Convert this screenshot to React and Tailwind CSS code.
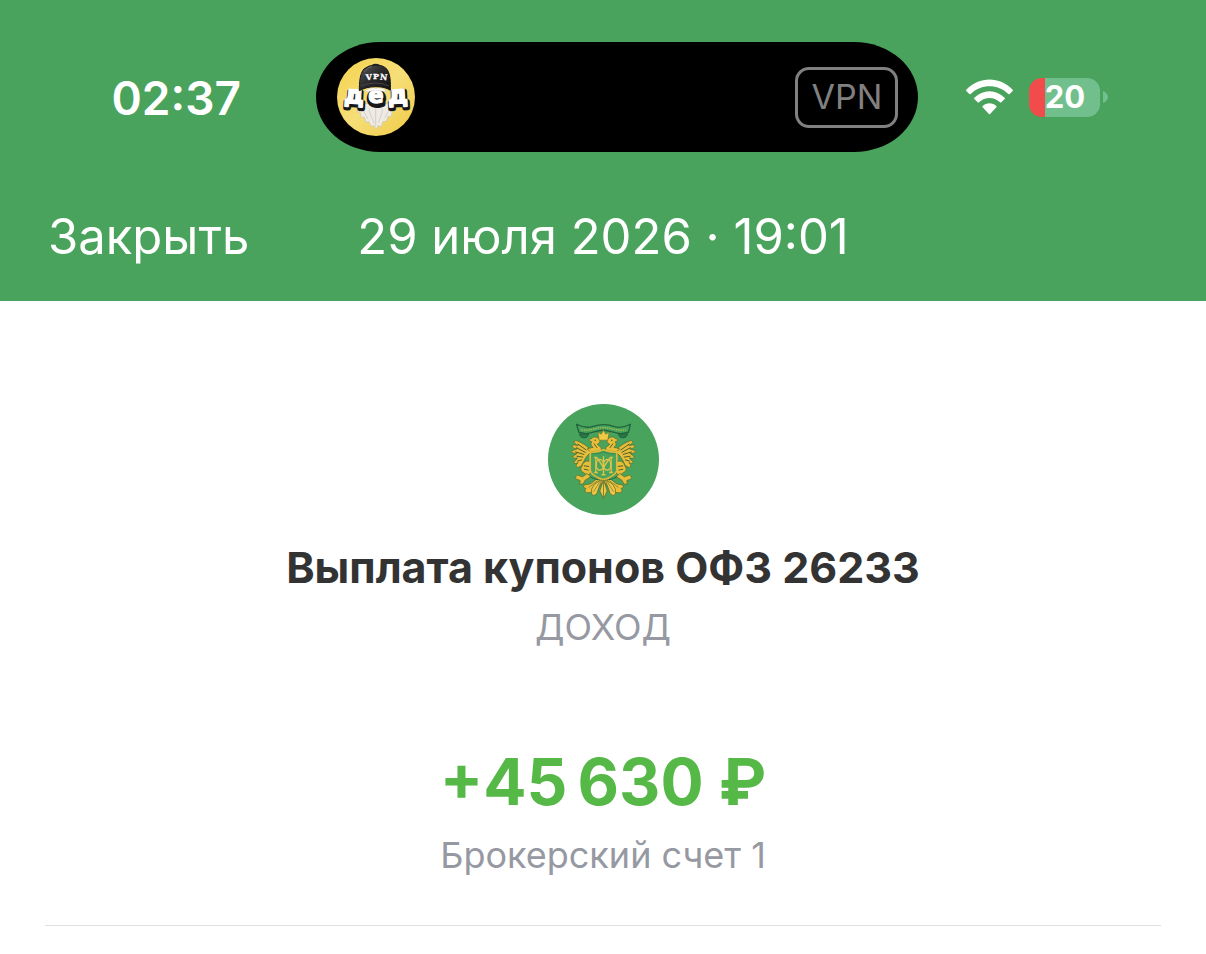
function GrandpaAvatar() {
  return (
    <svg viewBox="21 24 234 234" className="size-[78px] shrink-0" role="img" aria-label="VPN дед">
      <defs>
        <linearGradient id="cap" x1="0" y1="0" x2="1" y2="1">
          <stop offset="0" stopColor="#5a5a5c" />
          <stop offset="0.45" stopColor="#2c2c2e" />
          <stop offset="1" stopColor="#101012" />
        </linearGradient>
        <linearGradient id="coin" x1="0" y1="0" x2="1" y2="1">
          <stop offset="0" stopColor="#f5d24e" />
          <stop offset="0.5" stopColor="#f6de78" />
          <stop offset="1" stopColor="#efca45" />
        </linearGradient>
      </defs>
      <circle cx="138" cy="141" r="117" fill="url(#coin)" />
      <path d="M78 160 L82 186 L90 185 L94 203 L103 201 L108 217 L117 215 L124 230 L130 226 L139 238 L145 226 L154 231 L158 215 L169 214 L174 199 L183 201 L187 183 L195 182 L200 160 Z" fill="#eeebe5" stroke="#c9c3b4" strokeWidth="2" />
      <path d="M100 178 C102 190 110 196 114 208 M118 176 C116 190 128 204 132 220 M137 176 V230 M156 176 C160 190 148 204 146 218 M176 178 C176 188 168 194 164 204" fill="none" stroke="#c9c3b7" strokeWidth="2" />
      <g fontFamily="DejaVu Sans, sans-serif" fontWeight="700" textAnchor="middle" strokeLinejoin="round">
        <g fill="#171719" stroke="#171719" strokeWidth="14">
          <text x="73" y="165" fontSize="74" transform="rotate(3 73 165)">д</text>
          <text x="139" y="164" fontSize="68" strokeWidth="18">е</text>
          <text x="207" y="165" fontSize="74" transform="rotate(-3 207 165)">д</text>
        </g>
        <g fill="#fff" stroke="#fff" strokeWidth="5">
          <text x="71" y="160" fontSize="74" transform="rotate(3 71 160)">д</text>
          <text x="138" y="160" fontSize="68" strokeWidth="4">е</text>
          <text x="205" y="160" fontSize="74" transform="rotate(-3 205 160)">д</text>
        </g>
      </g>
      <path d="M104 125 Q118 110 137 115 Q156 110 171 125 Q154 124 137 120 Q121 124 104 125 Z" fill="#fff" stroke="#b5b5b5" strokeWidth="1" />
      <path d="M88 122 C88 98 89 72 102 57 Q116 45 137 45 Q160 45 171 58 C181 72 182 98 181 121 C170 114 158 110 137 110 C115 110 101 115 88 122 Z" fill="url(#cap)" stroke="#171719" strokeWidth="3" strokeLinejoin="round" />
      <path d="M126 47 Q137 41 148 47" fill="none" stroke="#202022" strokeWidth="5" />
      <path d="M103 66 Q113 50 126 49" fill="none" stroke="#777" strokeWidth="2" />
      <path d="M93 108 Q137 90 177 108" fill="none" stroke="#555557" strokeWidth="2" />
      <g fontFamily="DejaVu Serif, serif" fontWeight="700" fill="#fff" stroke="#fff" strokeWidth="1" fontSize="24" textAnchor="middle">
        <text x="117" y="90" transform="rotate(-5 117 90)">V</text>
        <text x="138" y="88">P</text>
        <text x="160" y="90" transform="rotate(6 160 90)">N</text>
      </g>
    </svg>
  );
}

function EagleWing() {
  return (
    <g>
      <g stroke="#4e652b" strokeWidth="2" fill="#e8bd3a" strokeLinejoin="round">
        <path d="M150 166 C140 172 132 186 123 205 L112 210 C104 208 106 201 113 195 C100 202 96 194 105 189 L111 181 C96 185 92 179 102 173 L110 167 C92 169 89 162 98 158 L110 154 C92 152 92 143 101 142 L113 144 C97 137 98 127 110 130 C126 136 141 146 150 156 Z" />
        <path d="M151 194 C139 186 127 194 124 207 C118 214 121 222 129 225 L140 234 C148 232 153 225 151 214 Z" />
        <path d="M140 228 L126 238 L111 233 C101 238 105 248 114 247 L119 250 L117 260 L128 260 L133 249 L150 238 Z" />
        <path d="M182 160 L150 163 L140 154 L158 149 C151 145 149 139 154 133 L148 130 C143 128 147 124 154 123 C160 115 172 118 177 126 C181 133 175 139 170 140 L182 150 Z" />
      </g>
      <path d="M111 139 L138 158 M107 150 L135 165 M104 163 L131 171 M108 176 L128 179 M110 191 L124 187 M130 205 L146 207 M130 215 L144 218 M160 138 L170 151" fill="none" stroke="#4b602a" strokeWidth="3" />
      <circle cx="164" cy="128" r="2" fill="#345b2a" />
      <path d="M189 250 L176 269 Q163 284 148 286 C134 288 129 279 137 273 C126 272 127 261 139 261 C151 262 160 250 174 240 Z" fill="#e8bd3a" stroke="#4e652b" strokeWidth="2" />
      <path d="M184 246 L169 288 Q158 300 153 288 Q149 276 162 260 Z" fill="#efc645" stroke="#4e652b" strokeWidth="2" />
      <path d="M178 252 L159 283 M171 250 L144 270" fill="none" stroke="#687a30" strokeWidth="2" />
    </g>
  );
}

function BondEmblem() {
  return (
    <svg viewBox="22 19 334 334" className="size-[111px]" role="img" aria-label="Эмблема ОФЗ">
      <circle cx="189" cy="186" r="167" fill="#48a35d" />
      <path d="M108 80 C127 90 143 91 158 86 C180 79 201 79 222 87 C238 92 252 89 270 80 L264 104 L242 108 C222 107 205 97 188 98 C170 98 154 107 136 108 L115 104 Z" fill="#48a35d" stroke="#21633b" strokeWidth="4" strokeLinejoin="round" />
      <path d="M123 97 C151 101 162 90 188 90 C215 90 228 101 256 97" fill="none" stroke="#a8bd4d" strokeWidth="4" strokeDasharray="4 3" />
      <path d="M116 109 Q121 125 139 119 L145 109 Z M262 109 Q257 125 239 119 L233 109 Z" fill="#297846" stroke="#20613a" strokeWidth="3" />
      <EagleWing />
      <g transform="matrix(-1 0 0 1 378 0)">
        <EagleWing />
      </g>
      <path d="M189 246 L200 281 L189 303 L178 281 Z M189 248 V300" fill="#efc645" stroke="#4e652b" strokeWidth="2" />
      <path d="M176 128 L172 103 L182 110 L189 97 L196 110 L206 103 L202 128 Z" fill="#f0c947" stroke="#6a752b" strokeWidth="2" />
      <path d="M149 163 Q170 166 189 157 Q208 166 229 163 V220 Q222 238 189 246 Q156 238 149 220 Z" fill="#48a35d" stroke="#dcb93c" strokeWidth="5" />
      <path d="M154 169 Q172 171 189 163 Q206 171 224 169" fill="none" stroke="#317e3e" strokeWidth="2" />
      <g fill="none" stroke="#e0c44a" strokeWidth="4">
        <path d="M161 180 H170 M161 225 H172 M206 225 H217 M208 180 H217 M166 180 V225 M212 180 V225 M170 181 L189 210 L208 181 M189 176 V232 M183 232 H195" />
        <ellipse cx="178" cy="202" rx="11" ry="16" />
        <ellipse cx="200" cy="202" rx="11" ry="16" />
      </g>
      <path d="M149 238 Q165 247 179 248 M229 238 Q213 247 199 248" fill="none" stroke="#28643b" strokeWidth="3" />
    </svg>
  );
}

function WifiIcon() {
  return (
    <svg viewBox="0 0 141 106" className="h-9 w-[47px] shrink-0" fill="#fff" role="img" aria-label="Wi-Fi">
      <path d="M1 31 C40 -10 101 -10 140 31 Q142 33 140 35 L131 44 Q129 46 127 44 C95 13 46 13 14 44 Q12 46 10 44 L1 35 Q-1 33 1 31 Z" />
      <path d="M25 55 C51 29 90 29 116 55 Q118 57 116 59 L106 69 Q104 71 102 69 C84 52 57 52 39 69 Q37 71 35 69 L25 59 Q23 57 25 55 Z" />
      <path d="M50 80 C62 69 79 69 91 80 Q93 82 91 84 L73 103 Q70.500 106 68 103 L50 84 Q48 82 50 80 Z" />
    </svg>
  );
}

function Battery() {
  return (
    <div className="flex items-center gap-[3px]">
      <div className="flex h-[39px] w-[71px] items-center justify-center rounded-[13px] bg-linear-to-r from-[#f14c4b] from-[16px] to-[#72bf8e] to-[16px] text-[31px] leading-9 font-bold">
        20
      </div>
      <svg viewBox="0 0 5 12" className="h-3 w-[5px]" aria-hidden="true">
        <path d="M0 0 C3 1 5 4 5 6 C5 8 3 11 0 12 Z" fill="#72bf8e" />
      </svg>
    </div>
  );
}

export default function App() {
  return (
    <div className="min-h-screen bg-white font-['Inter',sans-serif]">
      <header className="bg-[#4aa35c] pt-[42px] pb-8 text-white">
        <div className="grid grid-cols-[minmax(0,1.1fr)_602px_minmax(0,1fr)] items-center">
          <time className="pt-0.5 pl-9 text-center text-[46px] leading-[56px] font-semibold">02:37</time>
          <div className="flex h-[110px] items-center justify-between rounded-[64px/55px] bg-black pr-5 pl-[21px]">
            <GrandpaAvatar />
            <span className="flex h-[61px] w-[103px] items-center justify-center rounded-[14px] border-3 border-[#808080] text-[34px] leading-10 text-[#808080]">
              VPN
            </span>
          </div>
          <div className="flex items-center gap-4 pl-12">
            <WifiIcon />
            <Battery />
          </div>
        </div>
        <nav className="mt-[53px] grid grid-cols-[1fr_auto_1fr] items-center px-12 text-[49px] leading-16">
          <button type="button" className="justify-self-start">Закрыть</button>
          <h1>29 июля 2026 · 19:01</h1>
        </nav>
      </header>

      <main className="px-[45px] pt-[103px]">
        <section className="flex flex-col items-center border-b border-[#dfdfdf] pb-[46px] text-center text-[#9699a2]">
          <BondEmblem />
          <h2 className="mt-6 text-[43px] leading-14 font-bold text-[#333]">Выплата купонов ОФЗ 26233</h2>
          <p className="mt-2 text-[36px] leading-12">ДОХОД</p>
          <p className="mt-[91px] text-[64px] leading-20 font-bold text-[#55b847]">+45&#8201;630 ₽</p>
          <p className="mt-[9px] text-[36px] leading-12">Брокерский счет 1</p>
        </section>
      </main>
    </div>
  );
}
